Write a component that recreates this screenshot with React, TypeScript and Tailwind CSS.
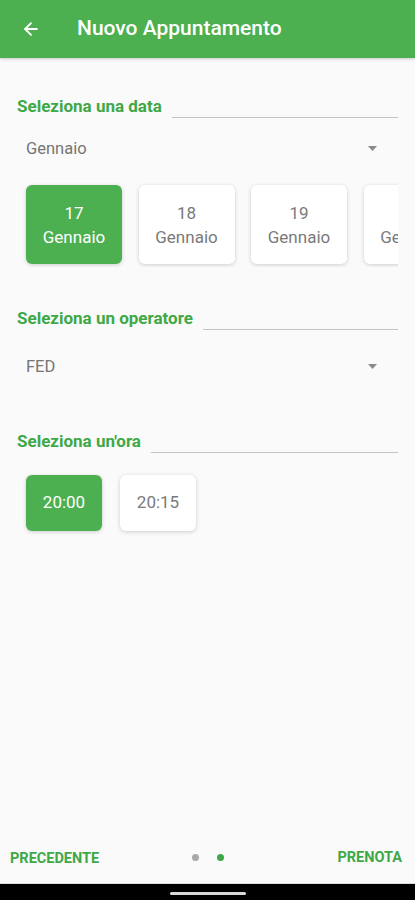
import { ArrowLeft } from "lucide-react";

const days = [
  { day: "17", month: "Gennaio", active: true },
  { day: "18", month: "Gennaio", active: false },
  { day: "19", month: "Gennaio", active: false },
  { day: "20", month: "Gennaio", active: false },
];

const hours = [
  { label: "20:00", active: true },
  { label: "20:15", active: false },
];

function SectionTitle({ label, className = "" }: { label: string; className?: string }) {
  return (
    <div className={`flex items-start gap-[10px] ${className}`}>
      <span className="text-[17px] leading-5 font-bold text-[#3fa846] whitespace-nowrap">{label}</span>
      <div className="flex-1 h-px mt-[21px] bg-[#c4c4c4]" />
    </div>
  );
}

function Dropdown({ value, className = "" }: { value: string; className?: string }) {
  return (
    <div className={`flex items-center justify-between pl-[9px] pr-[21px] ${className}`}>
      <span className="text-[16.5px] leading-5 text-[#757575]">{value}</span>
      <svg width="9" height="5" viewBox="0 0 9 5" className="mt-[-1px]">
        <path d="M0 0h9L4.5 5z" fill="#8a8a8a" />
      </svg>
    </div>
  );
}

export default function App() {
  return (
    <div className="w-[415px] h-[900px] flex flex-col bg-[#fafafa] font-['Roboto',sans-serif] overflow-hidden">
      {/* Toolbar */}
      <div className="h-[58px] shrink-0 bg-[#4caf50] flex items-center shadow-[0_1px_3px_rgba(0,0,0,0.2)] z-10">
        <ArrowLeft className="w-[20px] h-[20px] text-white ml-[21px]" strokeWidth={2.25} />
        <span className="ml-[36px] text-[21px] font-medium text-white">Nuovo Appuntamento</span>
      </div>

      <div className="flex-1 px-[17px]">
        <SectionTitle label="Seleziona una data" className="mt-[38px]" />
        <Dropdown value="Gennaio" className="mt-[21px]" />

        <div className="mt-[23px] overflow-hidden">
          <div className="flex gap-[16.5px] pl-[9px] py-[3px]">
            {days.map((d) => (
              <div
                key={d.day}
                className={`w-[96px] h-[79px] shrink-0 rounded-[6px] flex flex-col items-center justify-center text-[17px] leading-6 shadow-[0_1px_4px_rgba(0,0,0,0.18)] ${
                  d.active ? "bg-[#4caf50] text-white" : "bg-white text-[#7a7a7a]"
                }`}
              >
                <span>{d.day}</span>
                <span>{d.month}</span>
              </div>
            ))}
          </div>
        </div>

        <SectionTitle label="Seleziona un operatore" className="mt-[41px]" />
        <Dropdown value="FED" className="mt-[27px]" />

        <SectionTitle label="Seleziona un'ora" className="mt-[54px]" />

        <div className="flex gap-[18px] pl-[9px] mt-[22px]">
          {hours.map((h) => (
            <div
              key={h.label}
              className={`w-[76px] h-[56px] rounded-[6px] flex items-center justify-center text-[17px] shadow-[0_1px_4px_rgba(0,0,0,0.18)] ${
                h.active ? "bg-[#4caf50] text-white" : "bg-white text-[#7a7a7a]"
              }`}
            >
              {h.label}
            </div>
          ))}
        </div>
      </div>

      {/* Footer */}
      <div className="h-[50px] shrink-0 flex items-center pl-[10px] pr-[13px] pb-[1px]">
        <div className="flex-1">
          <span className="text-[14.5px] font-bold text-[#3fa846]">PRECEDENTE</span>
        </div>
        <div className="flex items-center gap-[18px] ml-[3px]">
          <span className="w-[7px] h-[7px] rounded-full bg-[#a8a8a8]" />
          <span className="w-[7px] h-[7px] rounded-full bg-[#3fa846]" />
        </div>
        <div className="flex-1 flex justify-end">
          <span className="text-[14.5px] font-bold text-[#3fa846]">PRENOTA</span>
        </div>
      </div>

      {/* System nav bar */}
      <div className="h-[17px] shrink-0 bg-black border-t border-[#dadada] flex items-center justify-center">
        <div className="w-[76px] h-[3px] rounded-full bg-[#d9d9d9] mt-[2px]" />
      </div>
    </div>
  );
}
